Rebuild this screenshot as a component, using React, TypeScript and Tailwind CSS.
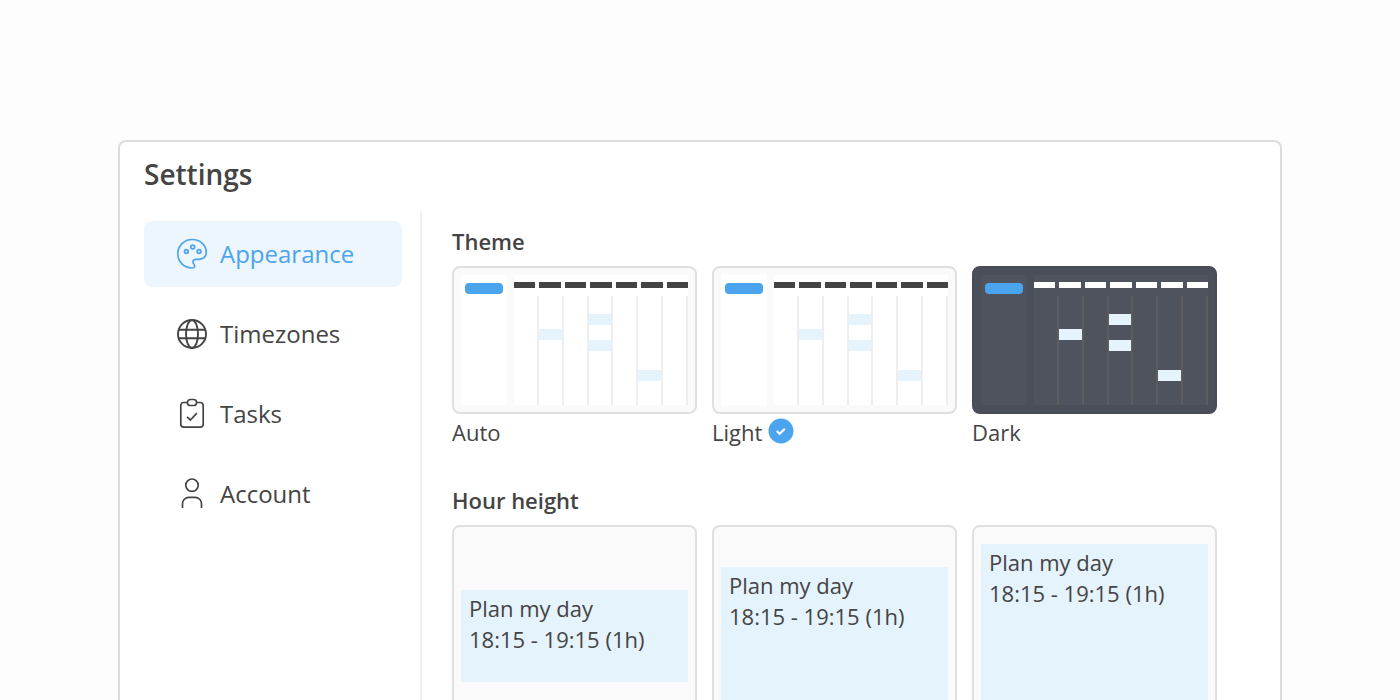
import type { ReactNode } from "react";

function NavIcon({ children }: { children: ReactNode }) {
  return (
    <svg
      viewBox="0 0 32 32"
      fill="none"
      stroke="currentColor"
      strokeWidth="1.7"
      strokeLinejoin="round"
      className="size-8 shrink-0"
      aria-hidden="true"
    >
      {children}
    </svg>
  );
}

const navItems = [
  {
    label: "Appearance",
    active: true,
    icon: (
      <NavIcon>
        <path d="M16.300 1.500C8.200 1.500 1.800 8 1.800 15.800c0 8.200 6.400 14.200 13.900 14.200 2.600 0 3.600-1.200 2.600-2.900-1.500-2.200-2.600-5.800 2.100-5.800 5.400.2 9.900-1.600 9.900-6.900C30.300 7.300 24.500 1.500 16.300 1.500Z" />
        <circle cx="10.400" cy="13.500" r="1.900" />
        <circle cx="16.700" cy="9" r="1.900" />
        <circle cx="23" cy="13.500" r="1.900" />
      </NavIcon>
    ),
  },
  {
    label: "Timezones",
    active: false,
    icon: (
      <NavIcon>
        <g strokeWidth="1.900">
          <circle cx="16" cy="16" r="14" />
          <ellipse cx="16" cy="16" rx="6" ry="14" />
          <path d="M2.500 11.800h27M2.500 20.200h27" />
        </g>
      </NavIcon>
    ),
  },
  {
    label: "Tasks",
    active: false,
    icon: (
      <NavIcon>
        <path d="M11.500 4.500H7.600a2.800 2.800 0 0 0-2.800 2.800v19a2.800 2.800 0 0 0 2.800 2.800h16.800a2.800 2.800 0 0 0 2.800-2.800v-19a2.800 2.800 0 0 0-2.800-2.800h-3.900" />
        <rect x="11.500" y="1.500" width="9" height="6" rx="2.800" />
        <path d="m11 18.800 3.500 3.200 6.300-6.800" />
      </NavIcon>
    ),
  },
  {
    label: "Account",
    active: false,
    icon: (
      <NavIcon>
        <circle cx="16" cy="7.200" r="6.200" />
        <path d="M6.500 30v-4.300a6.300 6.300 0 0 1 6.300-6.300h6.400a6.300 6.300 0 0 1 6.300 6.300V30" />
      </NavIcon>
    ),
  },
];

const days = [
  { offset: "", events: 0 },
  { offset: "pt-[33px]", events: 1 },
  { offset: "", events: 0 },
  { offset: "pt-[18px]", events: 2 },
  { offset: "", events: 0 },
  { offset: "pt-[74px]", events: 1 },
  { offset: "", events: 0 },
];

function ThemePreview({ dark = false }: { dark?: boolean }) {
  const frame = dark
    ? "border-[#484c58] bg-[#4a4f5a]"
    : "border-[#e0e0e0] bg-[#fafafa]";
  const panel = dark ? "bg-[#4e535e]" : "bg-white";
  const dash = dark ? "bg-white" : "bg-[#444444]";
  const line = dark ? "border-[#5d5d5f]" : "border-[#eeeeee]";
  return (
    <div className={`flex h-[148px] gap-[7px] rounded-lg border-2 p-[7px] ${frame}`}>
      <div className={`w-[46px] px-1 pt-2 ${panel}`}>
        <div className="h-[11px] rounded bg-[#4ba5ee]" />
      </div>
      <div className={`flex flex-1 flex-col gap-2 pt-[7px] ${panel}`}>
        <div className="grid grid-cols-7 gap-[4px]">
          {days.map((_, i) => (
            <div key={i} className={`h-[6px] ${dash}`} />
          ))}
        </div>
        <div className="grid flex-1 grid-cols-7">
          {days.map((day, i) => (
            <div key={i} className={`flex flex-col gap-[15px] border-r-2 ${line} ${day.offset}`}>
              {Array.from({ length: day.events }, (_, n) => (
                <div key={n} className="h-[11px] bg-[#e5f3fd]" />
              ))}
            </div>
          ))}
        </div>
      </div>
    </div>
  );
}

function CheckBadge() {
  return (
    <svg viewBox="0 0 28 28" className="size-7" aria-hidden="true">
      <circle cx="14" cy="14" r="12.500" fill="#4ba5ee" />
      <path
        d="m9.800 14 2.800 2.700 5.300-5"
        fill="none"
        stroke="white"
        strokeWidth="2.200"
      />
    </svg>
  );
}

const themes = [
  { name: "Auto", dark: false, selected: false },
  { name: "Light", dark: false, selected: true },
  { name: "Dark", dark: true, selected: false },
];

const hourHeights = [
  { name: "Small", height: "h-[92px]" },
  { name: "Medium", height: "h-[138px]" },
  { name: "Large", height: "h-[185px]" },
];

export default function App() {
  return (
    <div className="h-screen overflow-hidden bg-[#fdfdfd] px-8 pt-[140px] font-['Open_Sans',sans-serif] text-[#444444]">
      <main className="mx-auto max-w-[1164px] rounded-lg border-2 border-[#dcdcdc] bg-white pb-8">
        <h1 className="px-6 pt-3 text-[28px] leading-10 font-semibold">
          Settings
        </h1>
        <div className="mt-[18px] flex">
          <nav className="flex w-[302px] shrink-0 flex-col gap-[14px] border-r-2 border-[#eeeeee] pt-[9px] pr-[18px] pl-6">
            {navItems.map((item) => (
              <button
                key={item.label}
                type="button"
                className={`flex h-[66px] items-center gap-3 rounded-lg pl-8 text-left text-[24px] leading-8 ${
                  item.active ? "bg-[#edf5fd] text-[#4ba5ee]" : ""
                }`}
              >
                {item.icon}
                {item.label}
              </button>
            ))}
          </nav>
          <div className="flex-1 pt-[14px] pr-[63px] pl-[30px] text-[22px] leading-[31px]">
            <fieldset>
              <legend className="mb-[9px] font-semibold">Theme</legend>
              <div className="grid grid-cols-3 gap-[15px]">
                {themes.map((theme) => (
                  <label key={theme.name} className="relative block">
                    <input
                      type="radio"
                      name="theme"
                      defaultChecked={theme.selected}
                      className="sr-only"
                    />
                    <ThemePreview dark={theme.dark} />
                    <span className="mt-[3px] flex items-start gap-[5px]">
                      {theme.name}
                      {theme.selected && <CheckBadge />}
                    </span>
                  </label>
                ))}
              </div>
            </fieldset>
            <fieldset className="mt-[37px]">
              <legend className="mb-[9px] font-semibold">Hour height</legend>
              <div className="grid grid-cols-3 gap-[15px]">
                {hourHeights.map((option) => (
                  <label
                    key={option.name}
                    className="relative flex h-[222px] items-center rounded-lg border-2 border-[#e0e0e0] bg-[#fafafa] px-[7px]"
                  >
                    <input
                      type="radio"
                      name="hour-height"
                      aria-label={option.name}
                      className="sr-only"
                    />
                    <span className={`block w-full bg-[#e5f3fd] px-2 pt-[3px] ${option.height}`}>
                      <span className="block">Plan my day</span>
                      <span className="block">18:15 - 19:15 (1h)</span>
                    </span>
                  </label>
                ))}
              </div>
            </fieldset>
          </div>
        </div>
      </main>
    </div>
  );
}
